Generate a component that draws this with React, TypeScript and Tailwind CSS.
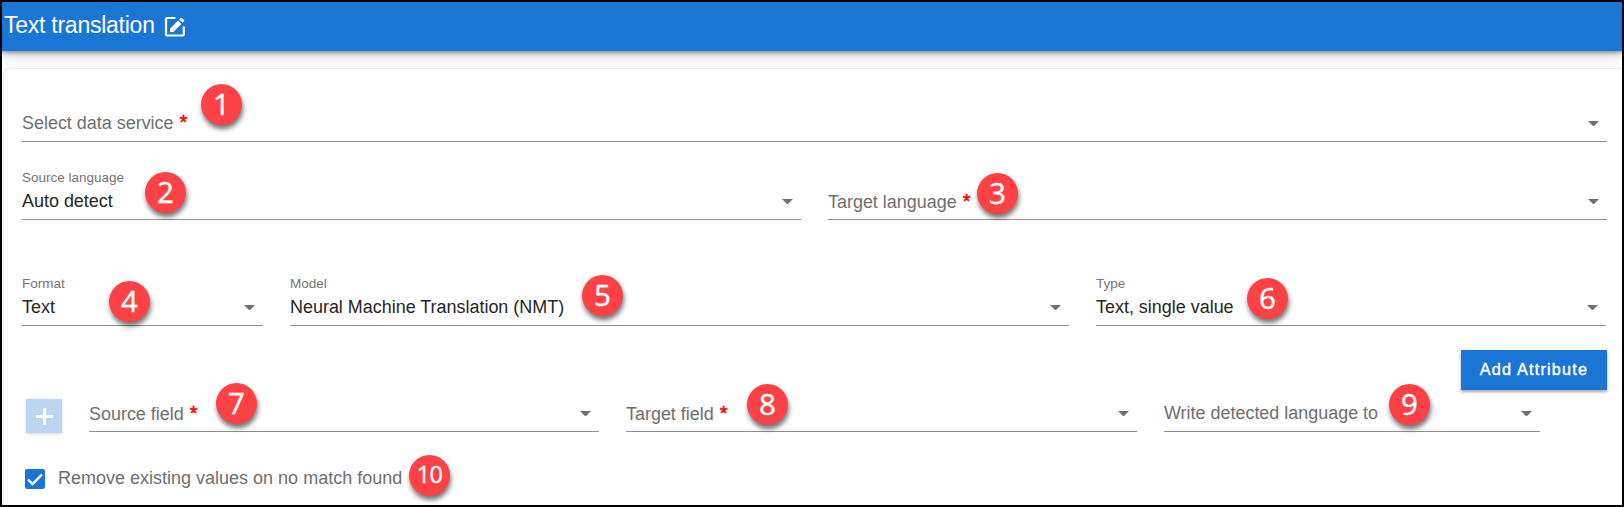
import clsx from "clsx";

type FieldProps = {
  label: string;
  value?: string;
  required?: boolean;
  className?: string;
  textClassName?: string;
};

const Field = ({ label, value, required, className, textClassName }: FieldProps) => {
  return (
    <div
      className={clsx(
        "flex h-12 shrink-0 items-end justify-between border-b border-[#8f8f8f]",
        className,
      )}
    >
      <div className={clsx("flex flex-col whitespace-nowrap", textClassName)}>
        {value && (
          <span className="text-[13.5px] leading-4 text-[#757575]">{label}</span>
        )}
        <span
          className={clsx(
            "flex text-[17.95px] leading-6",
            value ? "mt-[3px] text-[#262626]" : "text-[#6f6f6f]",
          )}
        >
          {value ?? label}
          {required && (
            <span className="-mt-px ml-1.5 text-[20px] text-[#ff0000] [-webkit-text-stroke:0.5px_#ff0000]">
              *
            </span>
          )}
        </span>
      </div>
      <svg className="mr-2 mb-[15px] h-[5.5px] w-[11px]" viewBox="0 0 11 5.5">
        <path d="M0 0h11L5.5 5.5z" fill="#707070" />
      </svg>
    </div>
  );
};

type BadgeProps = {
  n: number;
  className: string;
};

const Badge = ({ n, className }: BadgeProps) => (
  <div
    className={clsx(
      "absolute flex size-[41px] items-center justify-center rounded-full bg-[#fd4145] font-['Open_Sans',sans-serif] text-white shadow-[1px_4px_5px_rgba(0,0,0,0.55)] [-webkit-text-stroke:0.4px_white]",
      n > 9 ? "text-[23.5px] tracking-[-0.8px]" : "text-[29.5px]",
      className,
    )}
  >
    <span className="pb-px leading-none">{n}</span>
  </div>
);

export default function App() {
  return (
    <div className="relative flex h-[507px] w-[1624px] flex-col overflow-hidden border-2 border-black bg-[#fcfcfc] font-['Liberation_Sans',Arial,sans-serif]">
      <header className="relative flex h-[49px] shrink-0 items-center bg-[#1a76d4] pl-0.5 text-white shadow-[0_2px_4px_rgba(0,0,0,0.35),0_4px_12px_rgba(0,0,0,0.16)]">
        <h1 className="w-[152px] pb-[3px] text-[23px] leading-7 tracking-[-0.25px] whitespace-nowrap">
          Text translation
        </h1>
        <svg className="mt-px ml-2 size-[22px]" viewBox="0 0 22 22" fill="none">
          <path d="M11.500 2H3Q2 2 2 3V18.500Q2 19.500 3 19.500H18.800Q19.800 19.500 19.800 18.500V10.500" stroke="currentColor" strokeWidth="2.200" />
          <path d="M6 12.700v3.300h3.300L17.400 7.900l-3.300-3.300zM15.200 3.500l3.300 3.300 1.500-1.500q.6-.6 0-1.200L17.900 2q-.6-.6-1.200 0z" fill="currentColor" />
        </svg>
      </header>

      <main className="mt-[18px] ml-0.5 flex grow flex-col rounded-tl-md bg-white pl-[18px] shadow-[0_0_2px_rgba(0,0,0,0.2)]">
        <Field label="Select data service" required className="mt-[25px] w-[1585px]" textClassName="mb-1.5" />

        <div className="mt-[30px] flex gap-[27px]">
          <Field label="Source language" value="Auto detect" className="w-[779px]" textClassName="mb-1.5" />
          <Field label="Target language" required className="w-[779px]" textClassName="mb-[5px]" />
        </div>

        <div className="mt-[58px] flex gap-[27px]">
          <Field label="Format" value="Text" className="w-[241px]" textClassName="mb-1.5" />
          <Field label="Model" value="Neural Machine Translation (NMT)" className="w-[779px]" textClassName="mb-1.5" />
          <Field label="Type" value="Text, single value" className="w-[510px]" textClassName="mb-1.5" />
        </div>

        <button className="mt-6 ml-[1439px] h-10 w-[146px] shrink-0 bg-[#1a76d4] pb-0.5 text-[16.2px] tracking-[1.2px] text-white shadow-[0_2px_3px_rgba(0,0,0,0.35)] [-webkit-text-stroke:0.4px_white]">
          Add Attribute
        </button>

        <div className="-mt-[6px] flex items-end">
          <button className="ml-1 flex h-[34px] w-9 items-center justify-center bg-[#bad6f2] shadow-[0_1px_3px_rgba(0,0,0,0.15)]">
            <svg className="mt-px size-[17px]" viewBox="0 0 17 17">
              <path d="M8.500 0v17M0 8.500h17" stroke="white" strokeWidth="2.800" />
            </svg>
          </button>
          <div className="mb-px ml-[27px] flex gap-[27px]">
            <Field label="Source field" required className="w-[510px]" textClassName="mb-[5px]" />
            <Field label="Target field" required className="w-[511px]" textClassName="mb-[5px]" />
            <Field label="Write detected language to" className="w-[376px]" textClassName="mb-1.5" />
          </div>
        </div>

        <label className="mt-[30px] ml-[3px] flex h-6 items-center">
          <span className="mt-2 flex size-5 items-center justify-center rounded-[2px] bg-[#1a76d4]">
            <svg className="size-4" viewBox="0 0 16 16" fill="none">
              <path d="M1 8.500l4.500 4.500L15 3.500" stroke="white" strokeWidth="2.400" />
            </svg>
          </span>
          <span className="mt-1.5 ml-[13px] text-[18px] text-[#6f6f6f]">
            Remove existing values on no match found
          </span>
        </label>
      </main>

      <Badge n={1} className="top-[82px] left-[199px]" />
      <Badge n={2} className="top-[170px] left-[143px]" />
      <Badge n={3} className="top-[171px] left-[975px]" />
      <Badge n={4} className="top-[279px] left-[107px]" />
      <Badge n={5} className="top-[273px] left-[580px]" />
      <Badge n={6} className="top-[276px] left-[1245px]" />
      <Badge n={7} className="top-[381px] left-[214px]" />
      <Badge n={8} className="top-[382px] left-[745px]" />
      <Badge n={9} className="top-[382px] left-[1387px]" />
      <Badge n={10} className="top-[453px] left-[407px]" />
    </div>
  );
}
